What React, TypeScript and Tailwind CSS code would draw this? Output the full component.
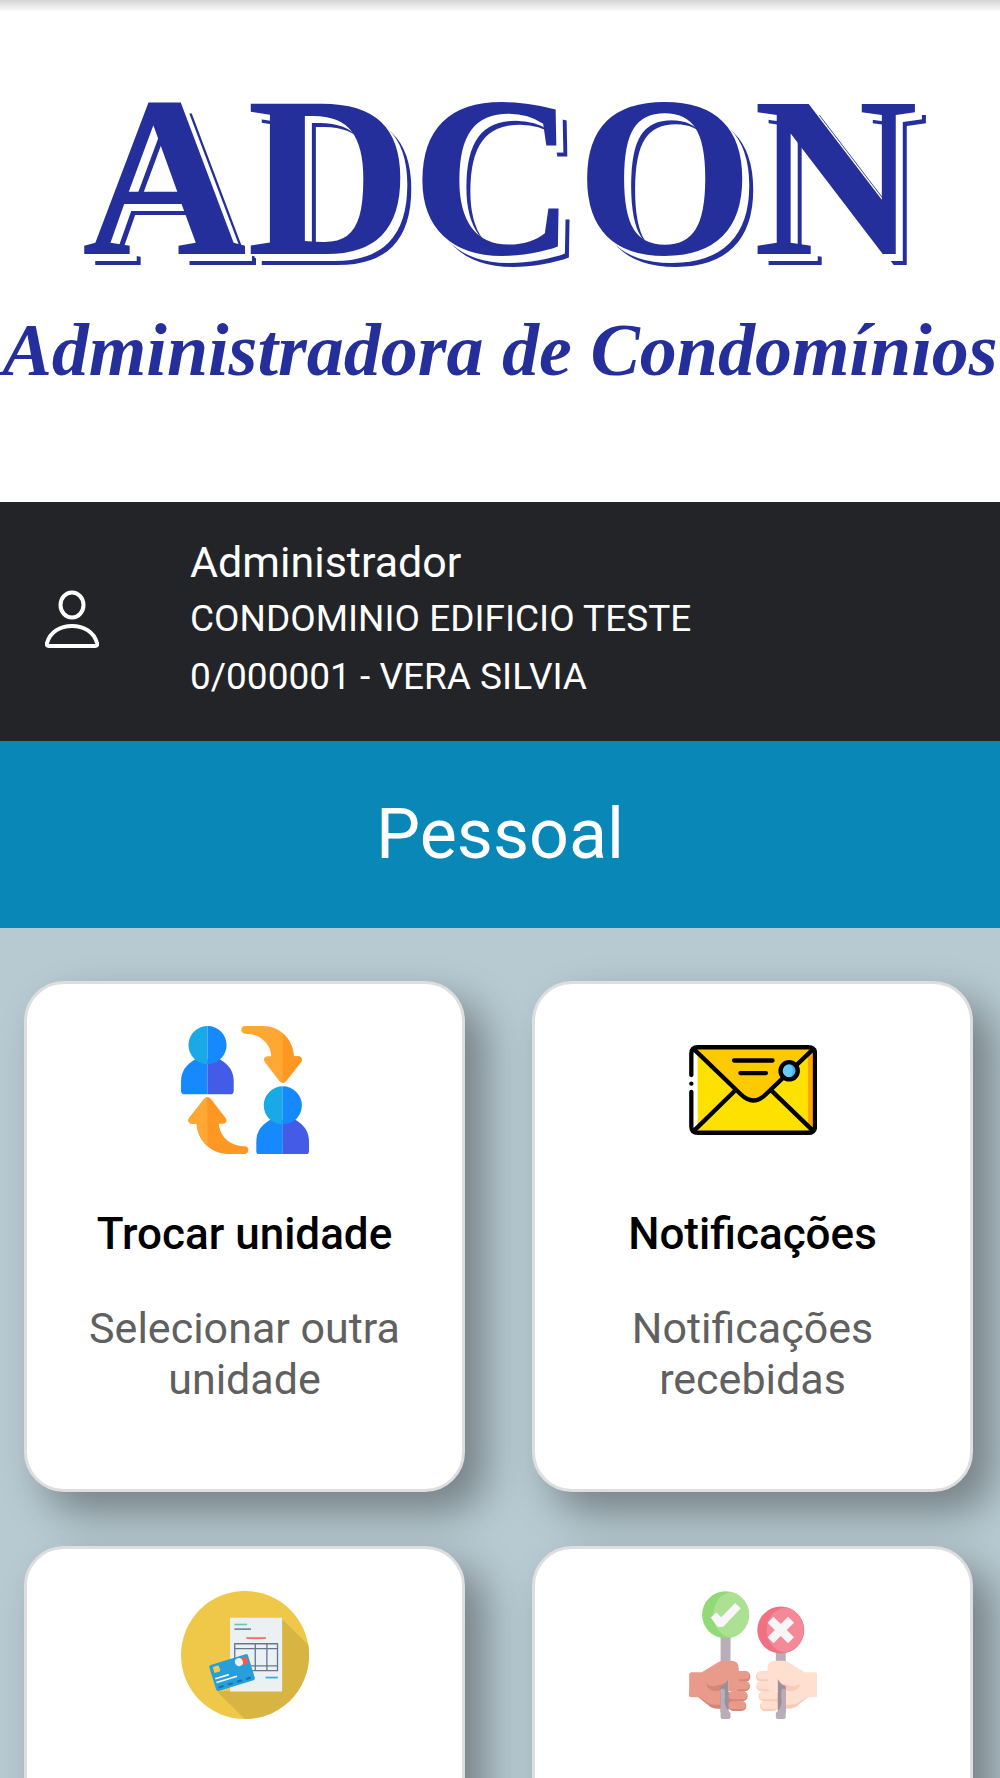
const SwapIcon = () => (
  <svg viewBox="64 80 386 386" className="size-32" aria-hidden="true">
    {[
      [144, 137],
      [371, 319],
    ].map(([x, y]) => (
      <g key={x} transform={`translate(${x} ${y})`}>
        <path
          d="M0 43h-37C-66 60-80 80-80 112v26q0 11 11 11H0z"
          fill="#1689ff"
        />
        <path d="M0 43h37C66 60 79 80 79 112v26q0 11-11 11H0z" fill="#445be7" />
        <path d="M0-57a57 57 0 0 0 0 115z" fill="#19a9e6" />
        <path d="M0-57a57 57 0 0 1 0 115z" fill="#1689ff" />
      </g>
    ))}
    <path
      d="M257 80h54c51 0 92 39 93 91h13c11 0 15 10 9 18l-46 58q-9 9-18 0l-45-58c-6-8-2-18 9-18h10c-1-39-34-68-79-68-15 0-15-23 0-23z"
      fill="#ffa733"
    />
    <path
      d="M371 105c21 17 32 39 33 66h13c11 0 15 10 9 18l-46 58q-4 4-9 4z"
      fill="#ff9822"
    />
    <path
      d="M258 466h-52c-52 0-92-40-95-91h-14c-10 0-14-10-8-18l46-58q9-9 18 0l45 58c6 8 3 18-8 18h-12c3 38 34 68 78 68 15 0 15 23 0 23z"
      fill="#ff9822"
    />
    <path
      d="M144 441c-20-17-32-40-33-66h-14c-10 0-14-10-8-18l46-58q4-4 9-4z"
      fill="#ffa733"
    />
  </svg>
);

const EnvelopeIcon = () => (
  <svg
    viewBox="58 20 386 386"
    className="size-32"
    fill="none"
    aria-hidden="true"
  >
    <path d="M84 84h335v258H84z" fill="#ffe100" />
    <path d="M417 92h20v236l-20 10z" fill="#ffa300" />
    <path d="M78 84h346L302 210l-24 25q-27 20-53 0z" fill="#fdca00" />
    <g
      stroke="#000"
      strokeWidth="13"
      strokeLinecap="round"
      strokeLinejoin="round"
    >
      <path d="M65 168v-64q0-20 20-20h333q20 0 20 20v218q0 20-20 20H85q-20 0-20-20V219" />
      <path d="M65 194h.1" />
      <path d="m75 92 139 134q38 37 76 0L430 92M75 334 198 214M430 334 306 214M194 124h116M213 162h77" />
    </g>
    <circle cx="360" cy="155" r="26" fill="#3db2f5" />
    <path d="M355 130a26 26 0 0 0 0 50q16-8 16-25t-16-25z" fill="#66ccff" />
    <circle cx="360" cy="155" r="26" stroke="#000" strokeWidth="13" />
  </svg>
);

const InvoiceIcon = () => (
  <svg
    viewBox="64 64 386 386"
    className="size-32"
    fill="none"
    aria-hidden="true"
  >
    <circle cx="257" cy="257" r="193" fill="#efc84a" />
    <path
      d="m368 148 80 79A193 193 0 0 1 257 450l-85-83 196-10z"
      fill="#d8b442"
    />
    <path d="M212 145h157v222H212z" fill="#ebf0f3" />
    <path d="M225 165h38" stroke="#66c9ae" strokeWidth="5" />
    <path d="M225 179h50" stroke="#71849a" strokeWidth="5" />
    <path d="M261 206h59" stroke="#e9695c" strokeWidth="5" />
    <path d="M319 325h37" stroke="#35a7e0" strokeWidth="5" />
    <path
      d="M226 223h129v81H226zM226 238h129M226 290h129M288 223v81M323 223v81"
      stroke="#66788d"
      strokeWidth="4"
    />
    <g transform="translate(218 310) rotate(-17)">
      <rect x="-61" y="-41" width="122" height="82" rx="6" fill="#279fda" />
      <rect x="-51" y="-33" width="19" height="19" rx="3" fill="#f3ca4e" />
      <circle cx="45" cy="-23" r="12" fill="#e9604f" />
      <circle cx="29" cy="-24" r="12" fill="#ebf0f3" />
      <path d="M-54 3h43M-54 15h65" stroke="#f4f8fa" strokeWidth="5" />
      <path
        d="M-52 31h16M-23 31h16M6 31h16M34 31h16"
        stroke="#1a6faa"
        strokeWidth="6"
      />
    </g>
  </svg>
);

const Hand = ({ skin, shade }: { skin: string; shade: string }) => (
  <>
    <path d="M58 382h25l31 25q12 12 31 12h60v-50H58z" fill={shade} />
    <g fill={shade}>
      <rect x="195" y="306" width="48" height="31" rx="15" />
      <rect x="190" y="336" width="52" height="30" rx="15" />
      <rect x="177" y="366" width="58" height="30" rx="15" />
      <rect x="176" y="396" width="55" height="30" rx="15" />
    </g>
    <g fill={skin}>
      <rect x="190" y="306" width="50" height="24" rx="12" />
      <rect x="190" y="336" width="50" height="24" rx="12" />
      <rect x="177" y="366" width="56" height="24" rx="12" />
      <rect x="176" y="396" width="53" height="24" rx="12" />
      <path d="M66 309h30l51-31q8-4 18-4h20q22 0 23 22v57q0 13-16 13h-15v-35l-24 20v56h-20q-15-1-26-12l-18-11H66q-8 0-8-8v-59q0-8 8-8z" />
    </g>
    <path
      d="M110 344q18 12 37 3 17-1 29-17-1 36-37 36-26-2-29-22z"
      fill={shade}
    />
    <path d="M153 350q14-2 24-20v100h-24z" fill="#9b8f9c" />
    <path
      d="M153 360q9-4 13 2 2 20-1 36 2 20 18 34v12q0 6-6 6h-18q-6 0-6-6z"
      fill="#b9adba"
    />
  </>
);

const VoteIcon = () => (
  <svg viewBox="58 63 386 387" className="size-32" aria-hidden="true">
    <path d="M153 200h30v84h-30zM320 246h30v40h-30z" fill="#b9adba" />
    <circle cx="168" cy="135" r="71" fill="#92d978" />
    <path d="M185 66a71 71 0 0 1 0 138c-72-12-72-126 0-138z" fill="#ace194" />
    <path
      d="m123 143 17-15 15 14 42-43 17 16-52 55q-10 4-19 0z"
      fill="#f8f6f8"
    />
    <circle cx="335" cy="181" r="71" fill="#ef7182" />
    <path d="M350 112a71 71 0 0 1 0 138c-77-12-77-126 0-138z" fill="#f48997" />
    <path
      d="m313 141 22 22 22-22 18 18-22 22 22 22-18 18-22-22-22 22-18-18 22-22-22-22z"
      fill="#f8f6f8"
    />
    <Hand skin="#e99b8b" shade="#d58678" />
    <g transform="translate(503 0) scale(-1 1)">
      <Hand skin="#ffdfd0" shade="#ffc9b6" />
    </g>
  </svg>
);

const items = [
  {
    id: "trocar-unidade",
    label: "Trocar unidade",
    title: "Trocar unidade",
    description: "Selecionar outra unidade",
    icon: <SwapIcon />,
  },
  {
    id: "notificacoes",
    label: "Notificações",
    title: "Notificações",
    description: "Notificações recebidas",
    icon: <EnvelopeIcon />,
  },
  { id: "boletos", label: "Boletos", icon: <InvoiceIcon /> },
  { id: "votacoes", label: "Votações", icon: <VoteIcon /> },
];

const MenuCard = ({ item }: any) => {
  return (
    <a
      href={`#${item.id}`}
      aria-label={item.label}
      className="flex min-h-[511px] flex-col items-center rounded-[40px] border-3 border-[#dedede] bg-white px-12 pt-[42px] text-center shadow-[20px_20px_40px_rgba(0,0,0,0.36)]"
    >
      {item.icon}
      {item.title && (
        <h2 className="mt-[54px] text-[44px] leading-[52px] font-medium text-black">
          {item.title}
        </h2>
      )}
      {item.description && (
        <p className="mt-[43px] text-[43px] leading-[51px] text-[#606060]">
          {item.description}
        </p>
      )}
    </a>
  );
};

const Logo = () => (
  <div className="flex h-[502px] flex-col items-center bg-linear-to-b from-[#d4d4d4] to-white to-[12px] pt-[52px] font-['Liberation_Serif',serif] font-bold whitespace-nowrap text-[#252f9b]">
    <h1 className="text-[228px] leading-[250px] [text-shadow:4px_4px_0_#fff,7px_7px_0_#fff,11px_11px_0_#252f9b]">
      ADCON
    </h1>
    <p className="text-[74px] leading-[96px] italic">
      Administradora de Condomínios
    </p>
  </div>
);

const App = () => {
  return (
    <div className="min-h-screen overflow-hidden bg-[#b7c9d1] font-[Roboto,sans-serif]">
      <header>
        <Logo />
        <div className="flex items-center bg-[#232428] pt-[34px] pb-[37px] text-white">
          <svg
            viewBox="0 0 54 60"
            className="ml-[45px] h-[60px] w-[54px] shrink-0"
            fill="none"
            stroke="currentColor"
            strokeWidth="4"
            aria-hidden="true"
          >
            <ellipse cx="27" cy="15" rx="11.5" ry="12.5" />
            <path
              d="M4 56h46q3 0 2-3C49 42 39 36 27 36S5 42 2 53q-1 3 2 3z"
              strokeLinejoin="round"
            />
          </svg>
          <div className="ml-[91px]">
            <p className="text-[43px] leading-[52px]">Administrador</p>
            <p className="mt-1 text-[37px] leading-[54px]">
              CONDOMINIO EDIFICIO TESTE
            </p>
            <p className="mt-1 text-[37px] leading-[54px]">
              0/000001 - VERA SILVIA
            </p>
          </div>
        </div>
      </header>
      <main>
        <h2 className="bg-[#0988b7] py-12 text-center text-[70px] leading-[91px] text-white">
          Pessoal
        </h2>
        <div className="grid grid-cols-2 gap-x-[67px] gap-y-[54px] pt-[53px] pr-[27px] pb-14 pl-6">
          {items.map((item) => (
            <MenuCard key={item.id} item={item} />
          ))}
        </div>
      </main>
    </div>
  );
};

export default App;
